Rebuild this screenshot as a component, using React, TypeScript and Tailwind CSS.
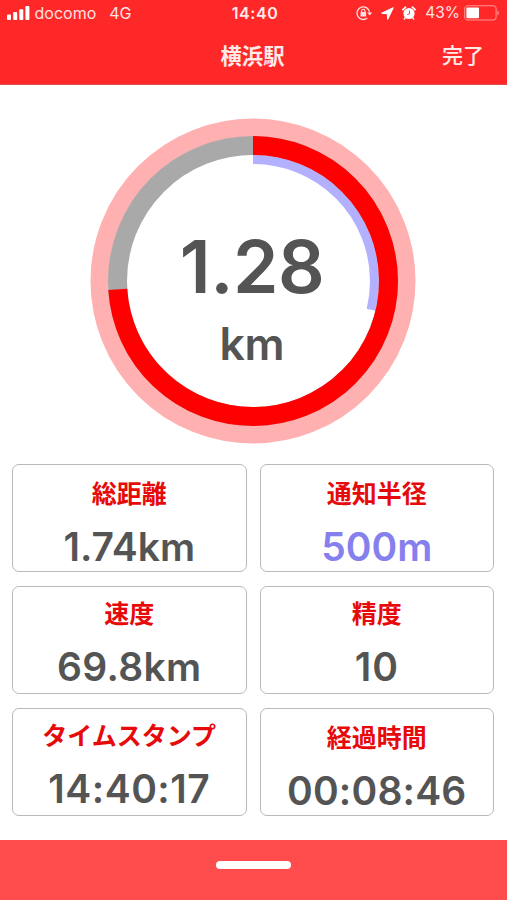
import clsx from "clsx";

type Stat = {
  label: string;
  value: string;
  valueClass: string;
  lowered?: boolean;
};

const stats: Stat[] = [
  { label: "総距離", value: "1.74km", valueClass: "text-[#545454]", lowered: true },
  { label: "通知半径", value: "500m", valueClass: "text-[#8680ee]", lowered: true },
  { label: "速度", value: "69.8km", valueClass: "text-[#545454] tracking-[0.3px]" },
  { label: "精度", value: "10", valueClass: "text-[#545454] tracking-[1px]" },
  { label: "タイムスタンプ", value: "14:40:17", valueClass: "text-[#545454] tracking-[0.5px]" },
  { label: "経過時間", value: "00:08:46", valueClass: "text-[#545454] tracking-[0.2px]", lowered: true },
];

function SignalIcon() {
  return (
    <svg aria-hidden="true" className="h-[15px] w-[23px]" fill="#fff" viewBox="0 0 23 15">
      <rect height="5.5" rx="1" width="4" x="0" y="8.5" />
      <rect height="8" rx="1" width="4" x="6.2" y="6" />
      <rect height="10.8" rx="1" width="4" x="12.3" y="3.2" />
      <rect height="14" rx="1" width="4" x="18.4" y="0" />
    </svg>
  );
}

function RotationLockIcon() {
  return (
    <svg aria-hidden="true" className="h-4 w-[17px]" fill="none" viewBox="0 0 17 16">
      <path d="M11.3 13.1A6.3 6.3 0 1 1 13.6 7.4" stroke="#ffe0e0" strokeWidth="1.3" />
      <path d="M11.2 7.4h5.1l-2.6 3.2z" fill="#ffe0e0" />
      <rect fill="#ffe0e0" height="4.4" rx=".6" width="5.6" x="4.5" y="7.1" />
      <path d="M5.6 7.4V6a1.7 1.7 0 0 1 3.4 0v1.4" stroke="#ffe0e0" strokeWidth="1.1" />
    </svg>
  );
}

function LocationIcon() {
  return (
    <svg aria-hidden="true" className="h-[13px] w-[13px]" fill="#fff" viewBox="0 0 14 14">
      <path
        d="M13.2.8.8 6.8l5.9.5.5 5.9z"
        stroke="#fff"
        strokeLinejoin="round"
        strokeWidth="1.1"
      />
    </svg>
  );
}

function AlarmIcon() {
  return (
    <svg aria-hidden="true" className="h-3.5 w-3.5" fill="none" viewBox="0 0 14 14">
      <circle cx="7" cy="7.5" fill="#fff" r="5.6" />
      <path d="M.9 3.6 3.6 1.2M13.1 3.6l-2.7-2.4" stroke="#fff" strokeLinecap="round" strokeWidth="1.7" />
      <path d="m3.2 11.8-.9 1.2M10.8 11.8l.9 1.2" stroke="#fff" strokeLinecap="round" strokeWidth="1.4" />
      <path d="M7.5 4.6v3.2L5.3 8.6" stroke="#ff2828" strokeWidth=".9" />
    </svg>
  );
}

function BatteryIcon() {
  return (
    <svg aria-hidden="true" className="h-4 w-9" fill="none" viewBox="0 0 36 16">
      <rect height="14.2" rx="3.2" stroke="#ff8f8f" strokeWidth="1.1" width="31.4" x=".7" y=".8" />
      <rect fill="#fff" height="10.6" rx="1" width="12.6" x="2.4" y="2.6" />
      <path d="M33.4 5.5c1.9.8 1.9 4.2 0 5z" fill="#ff8f8f" />
    </svg>
  );
}

function StatusBar() {
  return (
    <div className="grid h-6 grid-cols-3 items-center pt-px text-[16px] leading-6 text-[#ffe0e0]">
      <div className="flex items-center pl-[7px]">
        <SignalIcon />
        <span className="ml-[4.5px] text-[16px]">docomo</span>
        <span className="ml-[13px] text-[16px]">4G</span>
      </div>
      <span className="pl-[3px] text-center font-semibold tracking-[0.6px] text-[#ffeaea]">14:40</span>
      <div className="flex items-center justify-end pr-[7px]">
        <RotationLockIcon />
        <span className="ml-2">
          <LocationIcon />
        </span>
        <span className="ml-2">
          <AlarmIcon />
        </span>
        <span className="ml-[9px] text-[15.5px]">43%</span>
        <span className="ml-1">
          <BatteryIcon />
        </span>
      </div>
    </div>
  );
}

function DistanceRing() {
  return (
    <div className="relative ml-[90px] h-[326px] w-[326px]">
      <svg aria-hidden="true" className="block size-full" fill="none" viewBox="-163 -163 326 326">
        <circle r="153.5" stroke="#ffb0b0" strokeWidth="18" />
        <circle r="135.5" stroke="#a9a9a9" strokeWidth="19" />
        <g transform="rotate(-90)">
          <circle pathLength="100" r="121.5" stroke="#b3b0ff" strokeDasharray="28.8 100" strokeWidth="9" />
          <circle pathLength="100" r="135.5" stroke="#ff0000" strokeDasharray="74 100" strokeWidth="19" />
        </g>
      </svg>
      <div className="absolute inset-0 flex flex-col items-center pt-[109px] pr-[2px] font-semibold text-[#545454]">
        <span className="text-[73px] leading-[80px] tracking-[-0.5px]">1.28</span>
        <span className="mt-[15px] text-[44.5px] leading-[44px] tracking-[-0.2px]">km</span>
      </div>
    </div>
  );
}

function StatCard({ label, value, valueClass, lowered }: Stat) {
  return (
    <div
      className={clsx(
        "flex h-[108.5px] flex-col items-center rounded-[7px] border-[1.5px] border-[#b9b9b9]",
        lowered ? "pt-[15px]" : "pt-[13px]",
      )}
    >
      <span className="text-[25px] font-bold leading-7 text-[#e60a0a]">{label}</span>
      <span className={clsx("mt-[17px] text-[39px] font-semibold leading-[44px]", valueClass)}>{value}</span>
    </div>
  );
}

export default function App() {
  return (
    <div className="flex h-[900px] w-[507px] flex-col overflow-hidden bg-white font-['Inter','Noto_Sans_CJK_JP',sans-serif]">
      <header className="h-[84.5px] shrink-0 border-b border-[#e05050] bg-[#ff2828]">
        <StatusBar />
        <div className="grid grid-cols-3 items-center pt-[15px] text-[21px] leading-[34px] text-[#ffeaea]">
          <span />
          <h1 className="pr-0.5 text-center text-[21.3px] font-bold">横浜駅</h1>
          <button className="pr-[23px] text-right font-medium" type="button">
            完了
          </button>
        </div>
      </header>

      <main className="flex-1 pt-[33.5px]">
        <DistanceRing />
        <section className="mt-[19.5px] grid grid-cols-2 gap-x-[13px] gap-y-[13.5px] pl-3 pr-[13px]">
          {stats.map((stat) => (
            <StatCard key={stat.label} {...stat} />
          ))}
        </section>
      </main>

      <footer className="flex h-[60px] shrink-0 justify-center bg-[#ff4d4d] pt-[20.5px]">
        <span className="h-[8.5px] w-[75px] rounded-full bg-white" />
      </footer>
    </div>
  );
}
